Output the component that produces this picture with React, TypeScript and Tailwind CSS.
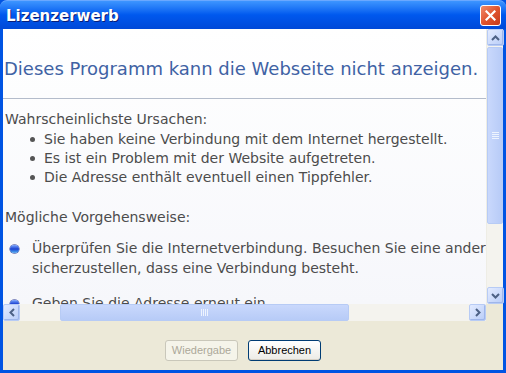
import React from 'react';

function ArrowUp() {
  return (
    <svg width="9" height="6" viewBox="0 0 9 6">
      <path d="M1 5 L4.5 1.5 L8 5" fill="none" stroke="#4d6185" strokeWidth="2" />
    </svg>
  );
}

function ArrowDown() {
  return (
    <svg width="9" height="6" viewBox="0 0 9 6">
      <path d="M1 1 L4.5 4.5 L8 1" fill="none" stroke="#4d6185" strokeWidth="2" />
    </svg>
  );
}

function ArrowLeft() {
  return (
    <svg width="6" height="9" viewBox="0 0 6 9">
      <path d="M5 1 L1.5 4.5 L5 8" fill="none" stroke="#4d6185" strokeWidth="2" />
    </svg>
  );
}

function ArrowRight() {
  return (
    <svg width="6" height="9" viewBox="0 0 6 9">
      <path d="M1 1 L4.5 4.5 L1 8" fill="none" stroke="#4d6185" strokeWidth="2" />
    </svg>
  );
}

function ScrollButton({ children }: { children: React.ReactNode }) {
  return (
    <div className="w-[17px] h-[17px] shrink-0 flex items-center justify-center rounded-[2px] border border-[#b7cbf5] bg-gradient-to-br from-[#e3ebff] to-[#b9cdf8] shadow-[inset_-1px_-1px_0_#9fb6ea]">
      {children}
    </div>
  );
}

function SphereBullet() {
  return (
    <span className="block w-[9px] h-[8px] rounded-full bg-gradient-to-b from-[#7fa6ff] via-[#1f3fd0] to-[#5fb0f0] shadow-[0_0_0_0.5px_#1a2a8a]" />
  );
}

export default function App() {
  return (
    <div className="w-[506px] h-[373px] flex flex-col overflow-hidden bg-[#0054e3] font-['DejaVu_Sans',sans-serif]">
      {/* Title bar */}
      <div className="h-[29px] shrink-0 rounded-t-[7px] flex items-center justify-between pl-[6px] pr-[5px] bg-gradient-to-b from-[#3d95ff] via-[#0058ee] to-[#0049d8] border-t border-[#6aa8ff]">
        <span className="pt-[3px] text-white font-bold text-[15px] [text-shadow:1px_1px_0_#0a1e78]">
          Lizenzerwerb
        </span>
        <div className="w-[21px] h-[21px] rounded-[3px] border border-white bg-gradient-to-br from-[#f08a6a] via-[#e0542e] to-[#c6381a] flex items-center justify-center">
          <svg width="11" height="11" viewBox="0 0 11 11">
            <path d="M1.5 1.5 L9.5 9.5 M9.5 1.5 L1.5 9.5" stroke="white" strokeWidth="2.2" strokeLinecap="square" />
          </svg>
        </div>
      </div>

      {/* Body with frame */}
      <div className="flex-1 flex flex-col mx-[3px] mb-[3px] bg-[#ece9d8]">
        <div className="grid grid-cols-[1fr_17px] grid-rows-[275px_17px]">
          {/* Page content */}
          <div className="overflow-hidden bg-gradient-to-b from-white to-[#f6f7fb] text-[#4c4c4c] text-[14px] leading-[19px] whitespace-nowrap">
            <div className="pl-[1px] pt-[28px] text-[18px] leading-[24px] text-[#4062a4]">
              Dieses Programm kann die Webseite nicht anzeigen.
            </div>
            <div className="mt-[17px] h-px bg-[#b4bccb]" />
            <div className="pl-[2px] mt-[11px]">Wahrscheinlichste Ursachen:</div>
            <ul className="mt-px">
              {[
                'Sie haben keine Verbindung mit dem Internet hergestellt.',
                'Es ist ein Problem mit der Website aufgetreten.',
                'Die Adresse enthält eventuell einen Tippfehler.',
              ].map((t) => (
                <li key={t} className="flex items-center pl-[27px]">
                  <span className="w-[5px] h-[5px] shrink-0 rounded-full bg-[#555] mr-[9px]" />
                  {t}
                </li>
              ))}
            </ul>
            <div className="pl-[2px] mt-[21px]">Mögliche Vorgehensweise:</div>
            <div className="mt-[11px] flex pl-[7px]">
              <div className="w-[22px] shrink-0 pt-[7px]">
                <SphereBullet />
              </div>
              <div className="leading-[20px]">
                Überprüfen Sie die Internetverbindung. Besuchen Sie eine andere Website, um
                <br />
                sicherzustellen, dass eine Verbindung besteht.
              </div>
            </div>
            <div className="mt-[15px] flex pl-[7px]">
              <div className="w-[22px] shrink-0 pt-[7px]">
                <SphereBullet />
              </div>
              <div className="leading-[20px]">Geben Sie die Adresse erneut ein.</div>
            </div>
          </div>

          {/* Vertical scrollbar */}
          <div className="flex flex-col bg-[#f4f3ee] border-l border-[#eeede5]">
            <ScrollButton>
              <ArrowUp />
            </ScrollButton>
            <div className="h-[177px] mt-px rounded-[2px] border border-[#b7cbf5] bg-gradient-to-r from-[#c9d8fc] to-[#b7cbf7] flex items-center justify-center">
              <div className="flex flex-col gap-[1px]">
                <span className="block w-[7px] h-px bg-[#eef4fe]" />
                <span className="block w-[7px] h-px bg-[#eef4fe]" />
                <span className="block w-[7px] h-px bg-[#eef4fe]" />
                <span className="block w-[7px] h-px bg-[#eef4fe]" />
              </div>
            </div>
            <div className="flex-1" />
            <ScrollButton>
              <ArrowDown />
            </ScrollButton>
          </div>

          {/* Horizontal scrollbar */}
          <div className="flex bg-[#f4f3ee]">
            <ScrollButton>
              <ArrowLeft />
            </ScrollButton>
            <div className="w-[40px]" />
            <div className="w-[289px] rounded-[2px] border border-[#b7cbf5] bg-gradient-to-b from-[#c9d8fc] to-[#b7cbf7] flex items-center justify-center">
              <div className="flex gap-[1px]">
                <span className="block h-[7px] w-px bg-[#eef4fe]" />
                <span className="block h-[7px] w-px bg-[#eef4fe]" />
                <span className="block h-[7px] w-px bg-[#eef4fe]" />
                <span className="block h-[7px] w-px bg-[#eef4fe]" />
              </div>
            </div>
            <div className="flex-1" />
            <ScrollButton>
              <ArrowRight />
            </ScrollButton>
          </div>
          <div className="bg-[#ece9d8]" />
        </div>

        {/* Buttons */}
        <div className="flex-1 flex items-center justify-center gap-[10px] pt-[10px]">
          <button className="w-[73px] h-[21px] ml-[-20px] rounded-[3px] border border-[#c9c7ba] bg-[#f5f4ea] text-[#aca899] text-[11px] font-['Liberation_Sans',sans-serif]">
            Wiedergabe
          </button>
          <button className="w-[73px] h-[21px] rounded-[3px] border border-[#003c74] bg-gradient-to-b from-white to-[#ecebe6] text-black text-[11px] shadow-[inset_0_-1px_0_#d6d0c5] font-['Liberation_Sans',sans-serif]">
            Abbrechen
          </button>
        </div>
      </div>
    </div>
  );
}
